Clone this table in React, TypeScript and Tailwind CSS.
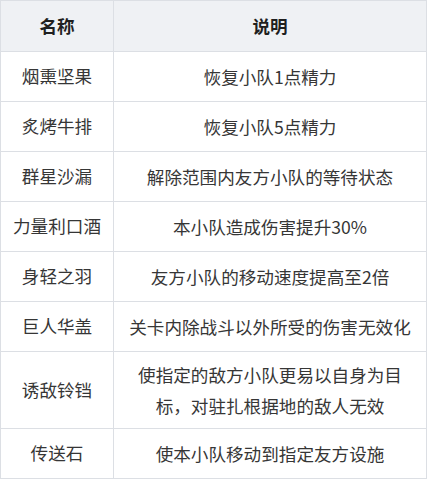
const rows: [string, string][] = [
  ['烟熏坚果', '恢复小队1点精力'],
  ['炙烤牛排', '恢复小队5点精力'],
  ['群星沙漏', '解除范围内友方小队的等待状态'],
  ['力量利口酒', '本小队造成伤害提升30%'],
  ['身轻之羽', '友方小队的移动速度提高至2倍'],
  ['巨人华盖', '关卡内除战斗以外所受的伤害无效化'],
  ['诱敌铃铛', '使指定的敌方小队更易以自身为目标，对驻扎根据地的敌人无效'],
  ['传送石', '使本小队移动到指定友方设施'],
]

export default function App() {
  return (
    <div className="w-[427px] h-[480px] bg-white overflow-hidden">
      <table
        className="w-[427px] border-collapse table-fixed text-[17.6px] text-[#363636]"
        style={{ fontFamily: '"Noto Sans CJK SC", "Liberation Sans", sans-serif' }}
      >
        <colgroup>
          <col className="w-[113px]" />
          <col />
        </colgroup>
        <thead>
          <tr className="h-[51px] bg-[#eff1f4]">
            <th className="border border-[#dcdfe4] font-bold text-[#1f1f1f] text-center">名称</th>
            <th className="border border-[#dcdfe4] font-bold text-[#1f1f1f] text-center">说明</th>
          </tr>
        </thead>
        <tbody>
          {rows.map(([name, desc]) => (
            <tr key={name} className={name === '诱敌铃铛' ? 'h-[77px]' : 'h-[50px]'}>
              <td className="border border-[#dcdfe4] text-center px-1">{name}</td>
              <td className="border border-[#dcdfe4] text-center px-[12px] leading-[31.5px]">{desc}</td>
            </tr>
          ))}
        </tbody>
      </table>
    </div>
  )
}
